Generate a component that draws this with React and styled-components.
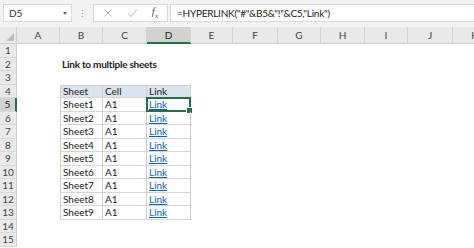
import React from "react";
import styled, { createGlobalStyle, css } from "styled-components";

const GlobalStyle = createGlobalStyle`
  html, body {
    margin: 0;
    padding: 0;
    background: #ffffff;
  }
  body {
    font-family: Lato, "Noto Sans", sans-serif;
    overflow: hidden;
  }
`;

const GREEN = "#217346";
const COLS = ["A", "B", "C", "D", "E", "F", "G", "H", "I", "J", "K"];
const WIDTHS = [43, 43, 44, 44, 42, 45, 43, 44, 43, 45, 44];

const rows = [
  { n: 1 },
  { n: 2, title: "Link to multiple sheets" },
  { n: 3 },
  { n: 4, head: true, cells: ["Sheet", "Cell", "Link"] },
  ...Array.from({ length: 9 }, (_, i) => ({
    n: i + 5,
    cells: [`Sheet${i + 1}`, "A1", "Link"],
  })),
  { n: 14 },
  { n: 15 },
];

const Page = styled.div`
  width: 474px;
  height: 248px;
  overflow: hidden;
  display: flex;
  flex-direction: column;
`;

const TopBar = styled.div`
  height: 27px;
  flex: none;
  background: #f3f3f3;
  display: flex;
  align-items: center;
  padding: 0 0 1px 3px;
  box-sizing: border-box;
`;

const NameBox = styled.div`
  width: 69px;
  height: 18px;
  box-sizing: border-box;
  background: #fff;
  border: 1px solid #dadada;
  display: flex;
  align-items: center;
  justify-content: space-between;
  padding: 0 4px 0 5px;
  font-size: 10px;
  color: #333;
`;

const Caret = styled.span`
  width: 0;
  height: 0;
  border-left: 2.5px solid transparent;
  border-right: 2.5px solid transparent;
  border-top: 3px solid #666;
`;

const Grip = styled.div`
  width: 21px;
  display: flex;
  flex-direction: column;
  align-items: center;
  gap: 2px;
  span {
    width: 1px;
    height: 1px;
    background: #a8a8a8;
  }
`;

const FxBox = styled.div`
  width: 75px;
  height: 18px;
  box-sizing: border-box;
  background: #fff;
  border: 1px solid #dadada;
  display: flex;
  align-items: center;
  justify-content: space-around;
  padding: 0 2px;
`;

const FxText = styled.span`
  font-family: "Liberation Serif", serif;
  font-style: italic;
  font-size: 11px;
  color: #555;
  sub {
    font-size: 7px;
  }
`;

const FormulaInput = styled.div`
  flex: 1;
  height: 18px;
  margin-left: 2px;
  box-sizing: border-box;
  background: #fff;
  border: 1px solid #dadada;
  border-right: none;
  display: flex;
  align-items: center;
  padding-left: 6px;
  font-size: 10px;
  letter-spacing: -0.25px;
  color: #222;
  white-space: nowrap;
`;

const Sheet = styled.div`
  display: grid;
  grid-template-columns: 17px ${WIDTHS.map((w) => `${w}px`).join(" ")};
  grid-template-rows: 17px;
  grid-auto-rows: 13.5px;
`;

const headerBase = css`
  background: #e9e9e9;
  color: #444;
  font-size: 10px;
  display: flex;
  align-items: center;
  justify-content: center;
  box-sizing: border-box;
`;

const Corner = styled.div`
  ${headerBase};
  position: relative;
  border-right: 1px solid #cfcfcf;
  border-bottom: 1px solid #cfcfcf;
  &::after {
    content: "";
    position: absolute;
    right: 2px;
    bottom: 2px;
    border-left: 8px solid transparent;
    border-bottom: 8px solid #bdbdbd;
  }
`;

const ColHead = styled.div`
  ${headerBase};
  border-right: 1px solid #d4d4d4;
  border-bottom: 1px solid #cfcfcf;
  ${(p) =>
    p.$active &&
    css`
      background: #d2d2d2;
      color: #1a1a1a;
      border-bottom: 2px solid ${GREEN};
    `}
`;

const RowHead = styled.div`
  ${headerBase};
  border-right: 1px solid #cfcfcf;
  border-bottom: 1px solid #d8d8d8;
  ${(p) =>
    p.$active &&
    css`
      background: #d2d2d2;
      color: #1a1a1a;
      border-right: 2px solid ${GREEN};
    `}
`;

const Cell = styled.div`
  position: relative;
  box-sizing: border-box;
  font-size: 10px;
  color: #222;
  display: flex;
  align-items: center;
  padding-left: 2px;
  white-space: nowrap;
  ${(p) =>
    p.$table &&
    css`
      border-right: 1px solid #cfcfcf;
      border-bottom: 1px solid #d6d6d6;
    `}
  ${(p) => p.$first && css`border-left: 1px solid #cfcfcf;`}
  ${(p) => p.$top && css`border-top: 1px solid #cfcfcf;`}
  ${(p) => p.$head && css`background: #dae3f1;`}
  ${(p) =>
    p.$bold &&
    css`
      font-weight: 700;
      letter-spacing: -0.25px;
      overflow: visible;
    `}
`;

const LinkText = styled.span`
  color: #0563c1;
  text-decoration: underline;
`;

const Selection = styled.div`
  position: absolute;
  left: -1px;
  top: -1px;
  right: -1px;
  bottom: -1px;
  border: 2px solid ${GREEN};
  pointer-events: none;
  &::after {
    content: "";
    position: absolute;
    right: -4px;
    bottom: -4px;
    width: 5px;
    height: 5px;
    background: ${GREEN};
    border: 1px solid #fff;
  }
`;

const CrossIcon = () => (
  <svg width="10" height="10" viewBox="0 0 10 10">
    <path d="M1.5 1.5 L8.5 8.5 M8.5 1.5 L1.5 8.5" stroke="#b4b4b4" strokeWidth="1" fill="none" />
  </svg>
);

const CheckIcon = () => (
  <svg width="11" height="10" viewBox="0 0 11 10">
    <path d="M1 5.5 L4 8.5 L10 1.5" stroke="#b4b4b4" strokeWidth="1" fill="none" />
  </svg>
);

const App = () => {
  return (
    <>
      <GlobalStyle />
      <Page>
        <TopBar>
          <NameBox>
            D5
            <Caret />
          </NameBox>
          <Grip>
            <span />
            <span />
            <span />
          </Grip>
          <FxBox>
            <CrossIcon />
            <CheckIcon />
            <FxText>
              f<sub>x</sub>
            </FxText>
          </FxBox>
          <FormulaInput>=HYPERLINK("#"&amp;B5&amp;"!"&amp;C5,"Link")</FormulaInput>
        </TopBar>
        <Sheet>
          <Corner />
          {COLS.map((c) => (
            <ColHead key={c} $active={c === "D"}>
              {c}
            </ColHead>
          ))}
          {rows.map((r) => (
            <React.Fragment key={r.n}>
              <RowHead $active={r.n === 5}>{r.n}</RowHead>
              {COLS.map((c, ci) => {
                const inTable = r.cells && ci >= 1 && ci <= 3;
                const value = inTable ? r.cells[ci - 1] : null;
                const isLink = inTable && ci === 3 && !r.head;
                return (
                  <Cell
                    key={c}
                    $table={inTable}
                    $first={inTable && ci === 1}
                    $top={r.head && inTable}
                    $head={r.head && inTable}
                    $bold={r.title && ci === 1}
                  >
                    {r.title && ci === 1 && r.title}
                    {isLink ? <LinkText>{value}</LinkText> : value}
                    {r.n === 5 && ci === 3 && <Selection />}
                  </Cell>
                );
              })}
            </React.Fragment>
          ))}
        </Sheet>
      </Page>
    </>
  );
};

export default App;
